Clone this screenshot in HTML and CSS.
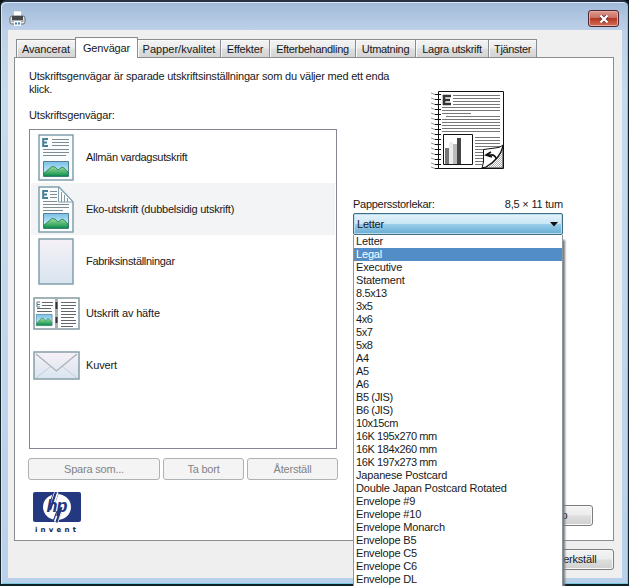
FILE: index.html
```html
<!DOCTYPE html>
<html lang="sv">
<head>
<meta charset="utf-8">
<title>Utskriftsinställningar</title>
<link rel="stylesheet" href="styles.css">
</head>
<body>
<div class="window">
  <header class="titlebar">
    <svg class="printer" width="18" height="18" viewBox="0 0 18 18">
      <path d="M4.5 1h8v6h-8z" fill="#fff" stroke="#a9bccd" stroke-width=".7"/>
      <rect x="1" y="6" width="15" height="8" rx="2" fill="#e4e6e8" stroke="#69727b"/>
      <path d="M3 6h11v4H3z" fill="#45494d"/>
      <path d="M2.5 11h12" stroke="#777" />
      <path d="M5 11h7v5H5z" fill="#f4f8fb"/>
      <path d="M6 12.5h2v2H6zM9 12.5h2v2H9z" fill="#477da5"/>
    </svg>
    <button class="close" aria-label="Stäng"><svg width="12" height="10" viewBox="0 0 12 10"><path d="M2.8 1.8 9.2 8.2M9.2 1.8 2.8 8.2" stroke="#68343a" stroke-width="4"/><path d="M2.5 1.5 9.5 8.5M9.5 1.5 2.5 8.5" stroke="#fff" stroke-width="2.3"/></svg></button>
  </header>
  <main class="client">
    <nav class="tabs">
      <a class="tab t1">Avancerat</a><a class="tab t2 active">Genvägar</a><a class="tab t3">Papper/kvalitet</a><a class="tab t4">Effekter</a><a class="tab t5">Efterbehandling</a><a class="tab t6">Utmatning</a><a class="tab t7">Lagra utskrift</a><a class="tab t8">Tjänster</a>
    </nav>
    <section class="panel">
      <div class="left">
        <p class="intro">Utskriftsgenvägar är sparade utskriftsinställningar som du väljer med ett enda<br>klick.</p>
        <p class="listlabel">Utskriftsgenvägar:</p>
        <ul class="shortcuts">
          <li><span class="icon"><svg width="36" height="47" viewBox="0 0 36 47">
            <defs>
              <linearGradient id="sky" x2="0" y2="1"><stop stop-color="#76c0e9"/><stop offset="1" stop-color="#eafafd"/></linearGradient>
              <linearGradient id="hill" x2="0" y2="1"><stop stop-color="#a9dc9e"/><stop offset="1" stop-color="#0b934d"/></linearGradient>
              <linearGradient id="paper" x2="0" y2="1"><stop stop-color="#f7f1f7"/><stop offset="1" stop-color="#d8e4ef"/></linearGradient>
              <g id="photo"><path d="M.5.5h25v15H.5z" fill="url(#sky)" stroke="#577e94"/><path d="M1 12 6 8Q9 4 12 6l3 3 4-3q2 0 6 5v4H1z" fill="url(#hill)" stroke="#188251" stroke-width=".8"/></g>
            </defs>
            <path d="M1 1h34v45H1z" fill="#fbfdfd" stroke="#80a0ad" stroke-width="1.5"/>
            <path d="M10 5H5.200v7H10M5.200 8.500H9" fill="none" stroke="#477f99" stroke-width="2"/>
            <path d="M14 5.500h17M14 8.500h17M14 11.500h17M5 15.500h26M5 18.500h26M5 21.500h23" stroke="#7e8d95"/>
            <use href="#photo" x="5" y="27"/></svg></span><span class="w1">Allmän vardagsutskrift</span></li>
          <li class="selected"><span class="icon"><svg width="36" height="47" viewBox="0 0 36 47">
            <path d="M1 1h20l14 15v30H1z" fill="#fbfdfd" stroke="#80a0ad" stroke-width="1.5"/>
            <path d="M10 5H5.200v7H10M5.200 8.500H9" fill="none" stroke="#477f99" stroke-width="2"/>
            <path d="M12 5.500h7M12 8.500h7M12 11.500h7M5 15.500h14M5 18.500h26M5 21.500h26M5 24.500h20" stroke="#7e8d95"/>
            <path d="M20.500 1v15H35z" fill="#f7fbfd" stroke="#80a0ad"/><path d="M23.500 6v10M26.500 9v7M29.500 12v4" stroke="#87979f"/>
            <use href="#photo" x="5" y="27"/></svg></span><span class="w2">Eko-utskrift (dubbelsidig utskrift)</span></li>
          <li><span class="icon"><svg width="36" height="47" viewBox="0 0 36 47"><path d="M1 1h34v45H1z" fill="url(#paper)" stroke="#80a0ad" stroke-width="1.5"/></svg></span><span class="w3">Fabriksinställningar</span></li>
          <li><span class="icon"><svg width="47" height="33" viewBox="0 0 47 33"><path d="M1 1h45v31H1z" fill="#fff" stroke="#8299a1" stroke-width="1.500"/><path d="M23.500 1v31" stroke="#a8b0b4" stroke-width="3"/><path d="M23.500 5v7M23.500 20v6" stroke="#333" stroke-width="2"/><path d="M7 5H4v5h3M4 7.500h3" fill="none" stroke="#557a8d"/><path d="M9 5.500h11M9 8.500h11M4 11.500h14M4 14.500h15M28 5.500h15M28 8.500h15M28 11.500h13M28 14.500h15M28 17.500h15M28 20.500h13M28 23.500h15M28 26.500h15M28 29.500h12" stroke="#61676a"/><use href="#photo" transform="translate(3 17) scale(.63 .75)"/></svg></span><span class="w4">Utskrift av häfte</span></li>
          <li><span class="icon"><svg width="47" height="29" viewBox="0 0 47 29"><path d="M1 1h45v27H1z" fill="url(#paper)" stroke="#879fa8" stroke-width="1.500"/><path d="M3 27 17 16M44 27 30 16" stroke="#c4cdd4"/><path d="M3 3 23.500 20 44 3" fill="none" stroke="#aab2b9" stroke-width="1.300"/></svg></span><span class="w4">Kuvert</span></li>
        </ul>
        <div class="actions"><button disabled>Spara som...</button><button disabled>Ta bort</button><button disabled>Återställ</button></div>
        <div class="brand">
          <svg width="48" height="31" viewBox="0 0 48 31"><rect width="48" height="30" rx="2" fill="#24387f"/><ellipse cx="24" cy="15" rx="14" ry="13" fill="#fff"/><path d="M20 9 23.300 0M22.200 30 26 20" stroke="#24387f" stroke-width="5.500"/><path d="M18 16 23.500 0M23 30 28 16" stroke="#fff" stroke-width="4.500"/><path d="M17 18 23 0M23.500 30 28.500 15" stroke="#24387f" stroke-width="2.200"/><text x="13.500" y="20" class="hp">hp</text></svg>
          <span class="invent">invent</span>
        </div>
      </div>
      <div class="right">
        <svg class="preview" width="76" height="80" viewBox="0 0 76 80">
          <defs><pattern id="hatch" width="2" height="2" patternUnits="userSpaceOnUse"><path d="M0 2 2 0" stroke="#777" stroke-width=".6"/></pattern></defs>
          <path d="M8.500 1.500h65v77h-65z" fill="#fff" stroke="#111"/>
          <path d="M5 4.500h6M5 9.500h6M5 14.500h6M5 19.500h6M5 24.500h6M5 29.500h6M5 34.500h6M5 39.500h6M5 44.500h6M5 49.500h6M5 54.500h6M5 59.500h6M5 64.500h6M5 69.500h6M5 74.500h6M5 78.500h6" stroke="#111"/>
          <path d="m1 3 4 1.500M1 8l4 1.500M1 13l4 1.500M1 18l4 1.500M1 23l4 1.500M1 28l4 1.500M1 33l4 1.500M1 38l4 1.500M1 43l4 1.500M1 48l4 1.500M1 53l4 1.500M1 58l4 1.500M1 63l4 1.500M1 68l4 1.500M1 73l4 1.500M1 77l4 1.500" stroke="#777" stroke-width=".8"/>
          <path d="M21 6h-7v8h7M14 10h6" fill="none" stroke="#333" stroke-width="2.600"/>
          <path d="M23 5.500h47M23 8.500h47M23 11.500h47M23 14.500h47M12 17.500h58M12 20.500h58M12 23.500h29M16 26.500h54M12 29.500h58M12 32.500h58M12 35.500h58M12 38.500h58M12 41.500h58M45 47.500h25M45 50.500h25M45 53.500h25M45 56.500h25M45 59.500h25M45 62.500h9M45 65.500h9M45 68.500h9M45 71.500h9M45 74.500h7" stroke="#777"/>
          <path d="M13.500 44.500h29v30h-29z" fill="#fff" stroke="#111"/>
          <path d="M15 58h4v16h-4z" fill="#777"/><path d="M19 52h4v22h-4z" fill="#ececec"/><path d="M23 54h4v20h-4z" fill="#bbb"/><path d="M27 48h4v26h-4z" fill="#444"/>
          <path d="M53.500 59.500 65 58q5 0 8-3v23H52l1.500-6z" fill="#fff" stroke="#111"/><path d="M73 56q-4 13-18 21l5 1h13z" fill="url(#hatch)"/><path d="M73 56q-3 13-17 21l-4 1" fill="none" stroke="#111" stroke-width="1.200"/><path d="m61 62-5 3 6 2M56.500 65h4q4-1 6 4" fill="none" stroke="#111" stroke-width="1.700"/>
        </svg>
        <div class="sizehead"><span class="sz">Pappersstorlekar:</span><span class="dim">8,5 × 11 tum</span></div>
        <div class="combo"><span>Letter</span><svg width="9" height="5" viewBox="0 0 9 5"><path d="M0 0h8L4 4.500z" fill="#111"/></svg>
          <ul class="menu"><li>Letter</li><li class="hot">Legal</li><li>Executive</li><li>Statement</li><li class="num">8.5x13</li><li class="num">3x5</li><li class="num">4x6</li><li class="num">5x7</li><li class="num">5x8</li><li class="num">A4</li><li class="num">A5</li><li class="num">A6</li><li class="num">B5 (JIS)</li><li class="num">B6 (JIS)</li><li class="num">10x15cm</li><li class="num">16K 195x270 mm</li><li class="num">16K 184x260 mm</li><li class="num">16K 197x273 mm</li><li>Japanese Postcard</li><li>Double Japan Postcard Rotated</li><li>Envelope #9</li><li>Envelope #10</li><li>Envelope Monarch</li><li>Envelope B5</li><li>Envelope C5</li><li>Envelope C6</li><li>Envelope DL</li></ul>
        </div>
        <button class="push help">Hjälp</button>
      </div>
    </section>
    <footer><button class="push">Verkställ</button></footer>
  </main>
</div>
</body>
</html>
```
FILE: styles.css
```css
* { box-sizing: border-box; }
body { margin: 0; overflow: hidden; background: #071112; font: 11px/13px "Liberation Sans", Arial, sans-serif; color: #191919; letter-spacing: -.2px; }
p, ul { margin: 0; padding: 0; list-style: none; }
button { font: inherit; letter-spacing: inherit; padding: 0; color: inherit; }
svg { display: block; flex: none; }
.window { width: 629px; height: 586px; border: 1px solid #17252b; border-top: 2px solid #273344; border-bottom: 2px solid #0c2226; border-radius: 6px 6px 0 0; background: linear-gradient(#a1bad9, #bdd0e8 28px, #c6dbef 90px, #b9d1ea); padding: 0 6px 6px 7px; box-shadow: inset 1px 1px #dce8f5, inset -1px -1px #78c7dc; }
.titlebar { height: 28px; display: flex; justify-content: space-between; padding: 8px 3px 0 1px; }
.close { width: 31px; height: 17px; border: 1px solid #4d2731; border-radius: 3px; box-shadow: inset 0 0 0 1px #e8aaa0; background: linear-gradient(#dc9a8e, #cb7164 45%, #b43925 50%, #d36f55); display: flex; justify-content: center; align-items: center; }
.client { height: 548px; background: #efefef; padding: 7px 8px 0 6px; display: flex; flex-direction: column; }
.tabs { display: flex; align-items: flex-end; height: 20px; padding-left: 2px; flex: none; }
.tab { height: 18px; border: 1px solid #898c91; border-bottom: 0; border-left-width: 0; background: linear-gradient(#f3f3f3, #ececec 48%, #dfdfdf 52%, #d4d4d4); display: flex; justify-content: center; align-items: center; white-space: nowrap; padding-top: 1px; box-shadow: inset 1px 1px #fafafa; }
.t1 { width: 60px; border-left-width: 1px; letter-spacing: -.15px; }
.t2 { letter-spacing: -.15px; }
.t3 { width: 83px; letter-spacing: 0; }
.t4 { width: 49px; letter-spacing: -.15px; }
.t5 { width: 86px; letter-spacing: -.3px; }
.t6 { width: 60px; letter-spacing: -.3px; }
.t7 { width: 73px; letter-spacing: -.3px; }
.t8 { width: 48px; letter-spacing: -.35px; }
.tab.active { height: 21px; margin-bottom: -1px; background: #fff; border-left: 1px solid #898c91; margin-left: -1px; width: 63px; position: relative; padding-bottom: 1px; }
.panel { height: 484px; flex: none; border: 1px solid #898c91; border-right-color: #7891a0; background: #fff; display: flex; padding-left: 13px; }
.left { width: 313px; padding-top: 12px; }
.intro { white-space: nowrap; padding-left: 1px; letter-spacing: -.21px; }
.listlabel { padding-left: 1px; margin-top: 13px; letter-spacing: -.17px; }
.shortcuts { width: 308px; height: 320px; border: 1px solid #828790; margin: 7px 0 0 1px; padding: 1px; }
.shortcuts li { height: 52px; display: flex; align-items: center; gap: 5px; }
.shortcuts .selected { background: #f3f4f6; }
.icon { width: 50px; display: flex; justify-content: center; }
.w1 { letter-spacing: -.32px; }
.w2 { letter-spacing: -.24px; }
.w3 { letter-spacing: -.3px; }
.w4 { letter-spacing: -.15px; }
.actions { display: flex; gap: 3px; margin-top: 9px; width: 310px; }
.actions button { height: 22px; border: 1px solid #adb2b5; border-radius: 3px; background: #f4f4f4; color: #838383; width: 81px; }
.actions button:first-child { width: 132px; }
.actions button:last-child { width: 91px; }
.brand { margin: 12px 0 0 5px; width: 48px; }
.hp { font: italic bold 18px "Liberation Sans", sans-serif; letter-spacing: -1px; fill: #24387f; }
.invent { display: block; margin: 2px 0 0 2px; font: bold 7px/10px "DejaVu Sans", sans-serif; letter-spacing: 3.2px; color: #19233f; }
.right { flex: 1; padding: 32px 0 0 12px; }
.preview { margin-left: 77px; }
.sizehead { display: flex; justify-content: space-between; width: 210px; margin-top: 28px; letter-spacing: -.28px; }
.dim { letter-spacing: -.2px; }
.combo { position: relative; width: 210px; height: 22px; margin-top: 2px; border: 1px solid #416d83; border-radius: 2px; background: linear-gradient(#e5f3fb, #c9e6f5 48%, #9acdea 52%, #65acd3); box-shadow: inset 0 0 0 1px #b9dcec; display: flex; align-items: center; justify-content: space-between; padding: 0 3px; }
.menu { position: absolute; left: -1px; top: 21px; width: 210px; height: 352px; border: 1px solid #8d969b; border-top: 0; background: #fff; box-shadow: 3px 4px 2px -1px #777; z-index: 2; letter-spacing: -.18px; }
.menu li { height: 13px; line-height: 13px; padding-left: 2px; }
.menu .num { letter-spacing: -.38px; }
.menu .hot { background: #538dc8; color: #fff; outline: 1px dotted #91816d; outline-offset: -1px; }
.push { display: block; width: 75px; height: 21px; border: 1px solid #7d7d7d; border-radius: 3px; background: linear-gradient(#f3f3f3, #ececec 48%, #dedede 52%, #d0d0d0); box-shadow: inset 0 0 0 1px #f8f8f8; }
.help { margin: 270px 0 0 165px; }
footer { display: flex; justify-content: flex-end; padding-top: 8px; }
```
